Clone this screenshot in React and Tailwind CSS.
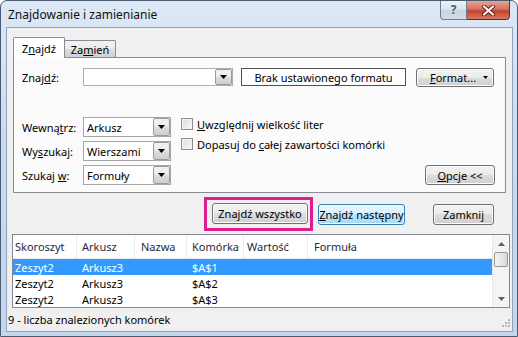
import React from "react";

const Arrow = ({ color = "#000" }) => (
  <svg width="7" height="4" viewBox="0 0 7 4"><path d="M0 0h7L3.5 4z" fill={color} /></svg>
);

const btnBase =
  "flex items-center justify-center rounded-[3px] border border-[#707070] bg-[linear-gradient(#f2f2f2,#ebebeb_50%,#dddddd_50%,#cfcfcf)] shadow-[inset_0_0_0_1px_#fcfcfc] text-black";

function DropBtn() {
  return (
    <div className="flex h-full w-[17px] items-center justify-center rounded-[2px] border border-[#9a9a9a] bg-[linear-gradient(#f2f2f2,#ebebeb_50%,#dddddd_50%,#cfcfcf)]">
      <Arrow />
    </div>
  );
}

function Select({ value }) {
  return (
    <div className="flex h-[20px] w-[88px] items-stretch border border-[#a6a6a6] bg-white">
      <div className="flex flex-1 items-center pl-[3px]">{value}</div>
      <DropBtn />
    </div>
  );
}

function Check({ children }) {
  return (
    <div className="flex h-[12px] items-center">
      <div className="h-[12px] w-[12px] border border-[#8e8f8f] bg-[linear-gradient(135deg,#dcdcdc,#fbfbfb)] shadow-[inset_0_0_0_1px_#f4f4f4]" />
      <span className="ml-[4px] whitespace-nowrap">{children}</span>
    </div>
  );
}

const cols = [
  { w: "w-[63px] pl-[2px]", h: "Skoroszyt" },
  { w: "w-[58px] pl-[5px]", h: "Arkusz" },
  { w: "w-[52px] pl-[6px]", h: "Nazwa" },
  { w: "w-[57px] pl-[5px]", h: "Komórka" },
  { w: "w-[64px] pl-[3px]", h: "Wartość" },
  { w: "flex-1 pl-[6px]", h: "Formuła" },
];

const rows = [
  ["Zeszyt2", "Arkusz3", "", "$A$1", "", ""],
  ["Zeszyt2", "Arkusz3", "", "$A$2", "", ""],
  ["Zeszyt2", "Arkusz3", "", "$A$3", "", ""],
];

export default function App() {
  return (
    <div className="h-[337px] w-[518px] overflow-hidden bg-white font-['Noto_Sans','Open_Sans',sans-serif] text-[11px] leading-none text-black">
      <div className="flex h-full w-full flex-col rounded-t-[7px] border border-[#4a5a70] bg-[linear-gradient(#dde8f5,#cadcf0_40%,#c3d6ec)]">
        {/* title bar */}
        <div className="flex h-[26px] items-start">
          <span className="ml-[7px] mt-[8px] text-[12px] text-[#111]">Znajdowanie i zamienianie</span>
          <div className="ml-auto mr-[7px] flex">
            <div className="flex h-[19px] w-[27px] items-center justify-center rounded-bl-[4px] border border-t-0 border-[#6d7d92] bg-[linear-gradient(#eef2f7,#d9e1ea_50%,#c8d3df_50%,#d3dde8)]">
              <span className="text-[12px] font-bold text-[#4d5d72]">?</span>
            </div>
            <div className="flex h-[19px] w-[43px] items-center justify-center rounded-br-[4px] border border-l-0 border-t-0 border-[#6b2b22] bg-[linear-gradient(#e8a493,#d2735f_45%,#c2432c_55%,#d9755f)]">
              <svg width="13" height="11" viewBox="0 0 13 11">
                <path d="M2 1.5l9 8M11 1.5l-9 8" stroke="#5a1f18" strokeWidth="4" strokeLinecap="round" />
                <path d="M2 1.5l9 8M11 1.5l-9 8" stroke="#fff" strokeWidth="2.2" strokeLinecap="round" />
              </svg>
            </div>
          </div>
        </div>

        {/* client area */}
        <div className="ml-[5px] mr-[4px] flex h-[305px] flex-col border border-[#8ea3bd] bg-[#f0f0f0]">
          {/* tabs */}
          <div className="ml-[6px] mt-[9px] flex h-[21px] items-end">
            <div className="relative z-10 flex h-[21px] w-[52px] items-start justify-center rounded-t-[2px] border border-b-0 border-[#898c95] bg-white pt-[5px]">
              <span>Z<span className="underline">n</span>ajdź</span>
            </div>
            <div className="flex h-[18px] w-[51px] items-start justify-center rounded-tr-[2px] border border-b-0 border-l-0 border-[#898c95] bg-[linear-gradient(#f2f2f2,#ebebeb_50%,#dddddd_50%,#cfcfcf)] pt-[3px]">
              <span>Za<span className="underline">m</span>ień</span>
            </div>
          </div>

          {/* panel */}
          <div className="mx-[6px] -mt-[1px] flex h-[136px] flex-col border border-[#898c95] bg-[#fbfbfb]">
            <div className="mt-[10px] flex h-[18px] items-center pl-[8px]">
              <div className="w-[61px]">Znaj<span className="underline">d</span>ź:</div>
              <div className="flex h-[18px] w-[150px] items-stretch border border-[#abadb3] bg-white">
                <div className="flex-1" />
                <DropBtn />
              </div>
              <div className="ml-[8px] flex h-[18px] w-[165px] items-center justify-center border border-[#505050] bg-white">
                Brak ustawionego formatu
              </div>
              <div className={`${btnBase} ml-[10px] h-[19px] w-[78px]`}>
                <span className="ml-[6px] flex-1 text-center"><span className="underline">F</span>ormat...</span>
                <span className="mr-[5px]"><svg width="5" height="3" viewBox="0 0 5 3"><path d="M0 0h5L2.5 3z" fill="#000" /></svg></span>
              </div>
            </div>

            <div className="mt-[31px] flex pl-[8px] pr-[10px]">
              <div className="flex flex-col gap-[4px]">
                <div className="flex items-center">
                  <div className="w-[61px]">Wewną<span className="underline">t</span>rz:</div>
                  <Select value="Arkusz" />
                </div>
                <div className="flex items-center">
                  <div className="w-[61px]">Wy<span className="underline">s</span>zukaj:</div>
                  <Select value="Wierszami" />
                </div>
                <div className="flex items-center">
                  <div className="w-[61px]">Szukaj <span className="underline">w</span>:</div>
                  <Select value="Formuły" />
                </div>
              </div>
              <div className="ml-[10px] mt-[1px] flex flex-col gap-[8px]">
                <Check><span className="underline">U</span>względnij wielkość liter</Check>
                <Check>Dopasuj do <span className="underline">c</span>ałej zawartości komórki</Check>
              </div>
              <div className={`${btnBase} ml-auto h-[20px] w-[70px] self-end`}>
                <span><span className="underline">O</span>pcje &lt;&lt;</span>
              </div>
            </div>
          </div>

          {/* buttons row */}
          <div className="mt-[4px] flex h-[34px] items-center">
            <div className="ml-[197px] flex h-[34px] items-start border-[3px] border-[#df1d8f] pl-[5px] pr-[2px] pt-[3px]">
              <div className={`${btnBase} h-[21px] w-[96px]`}>
                <span>Zna<span className="underline">j</span>dź wszystko</span>
              </div>
            </div>
            <div className="ml-[5px] flex h-[21px] w-[87px] items-center justify-center rounded-[3px] border border-[#3c7fb1] bg-[linear-gradient(#eaf6fd,#d9f0fc_50%,#bee6fd_50%,#a7d9f5)] shadow-[inset_0_0_0_1px_#f2fafe]">
              <span><span className="underline">Z</span>najdź następny</span>
            </div>
            <div className={`${btnBase} ml-[28px] h-[21px] w-[61px]`}>Zamknij</div>
          </div>

          {/* list */}
          <div className="ml-[5px] mr-[2px] mt-[3px] flex h-[74px] border border-[#828790] bg-white">
            <div className="flex flex-1 flex-col">
              <div className="flex h-[24px] items-center border-b border-[#e5e5e5] text-[#1e2b3b]">
                {cols.map((c, i) => (
                  <div key={i} className={`${c.w} flex h-full items-center ${i > 0 ? "border-l border-[#ececec]" : ""}`}>
                    {c.h}
                  </div>
                ))}
              </div>
              {rows.map((r, ri) => (
                <div key={ri} className={`flex h-[16px] items-center ${ri === 0 ? "bg-[#3399ff] text-white" : "text-black"}`}>
                  {r.map((v, i) => (
                    <div key={i} className={`${cols[i].w} ${i > 0 ? "border-l border-transparent" : ""}`}>{v}</div>
                  ))}
                </div>
              ))}
            </div>
            <div className="flex w-[17px] flex-col border-l border-[#e8e8e8] bg-[#f4f4f4]">
              <div className="flex h-[17px] items-center justify-center">
                <svg width="7" height="4" viewBox="0 0 7 4"><path d="M0 4h7L3.5 0z" fill="#606060" /></svg>
              </div>
              <div className="mx-[1px] h-[15px] rounded-[2px] border border-[#959595] bg-[linear-gradient(90deg,#f3f3f3,#e8e8e8_50%,#d6d6d6)]" />
              <div className="flex-1" />
              <div className="flex h-[17px] items-center justify-center">
                <Arrow color="#606060" />
              </div>
            </div>
          </div>

          {/* status bar */}
          <div className="flex h-[23px] items-center">
            <span className="ml-[1px]">9 - liczba znalezionych komórek</span>
            <div className="ml-auto mr-[2px] self-end pb-[2px]">
              <svg width="10" height="10" viewBox="0 0 10 10" fill="#b8b8b8">
                <rect x="8" y="0" width="2" height="2" />
                <rect x="5" y="3" width="2" height="2" />
                <rect x="8" y="3" width="2" height="2" />
                <rect x="2" y="6" width="2" height="2" />
                <rect x="5" y="6" width="2" height="2" />
                <rect x="8" y="6" width="2" height="2" />
              </svg>
            </div>
          </div>
        </div>
      </div>
    </div>
  );
}
